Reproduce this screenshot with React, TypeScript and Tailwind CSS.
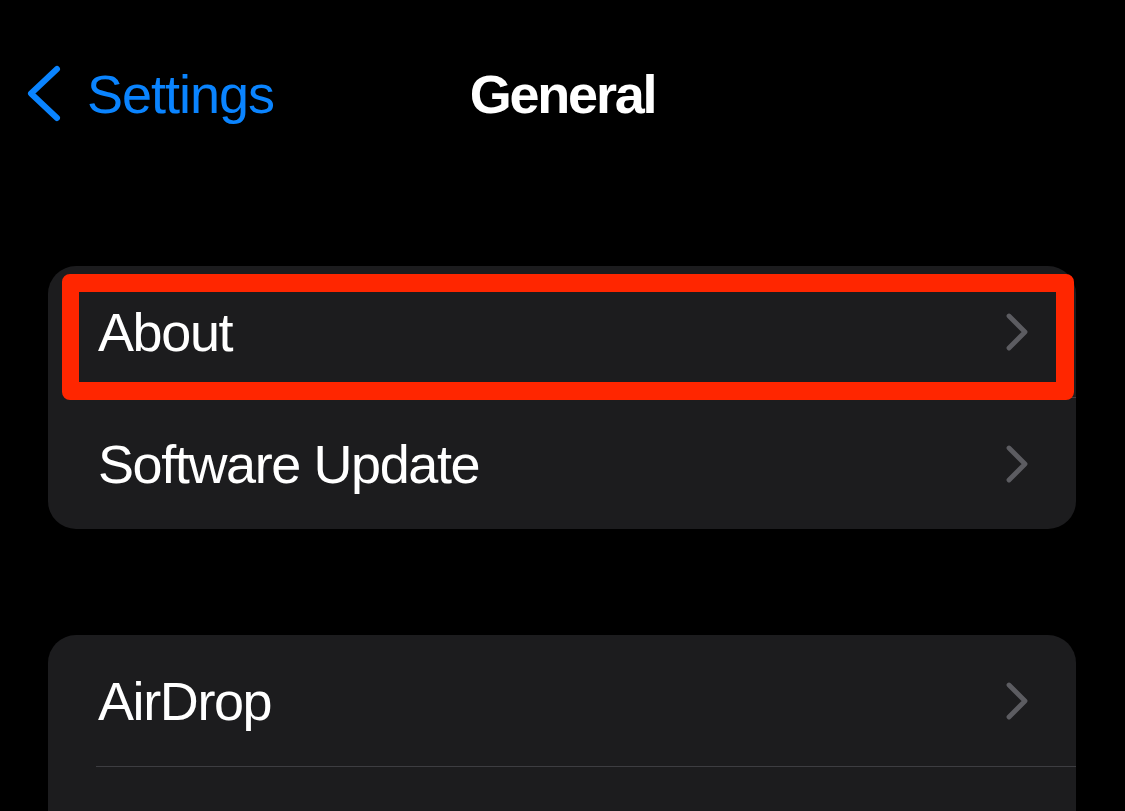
import React from 'react';

const FONT = { fontFamily: '"Liberation Sans", Arial, sans-serif' };

const Chevron: React.FC = () => (
  <svg width="24" height="40" viewBox="0 0 24 40" fill="none" className="shrink-0">
    <path d="M4 4 L20 20 L4 36" stroke="#5c5c61" strokeWidth="4.8" strokeLinecap="round" strokeLinejoin="round" />
  </svg>
);

interface RowProps {
  label: string;
  highlighted?: boolean;
  divider?: boolean;
}

const Row: React.FC<RowProps> = ({ label, highlighted, divider }) => {
  return (
    <div className="relative">
      <div className="flex h-[131px] items-center justify-between pl-[50px] pr-[47px]">
        <span className="text-[54px] leading-none tracking-[-1.4px] text-white">{label}</span>
        <Chevron />
      </div>
      {divider && <div className="ml-[48px] h-px bg-[#3d3d41]" />}
      {/* red annotation box */}
      {highlighted && (
        <div className="pointer-events-none absolute left-[14px] top-[8px] h-[126px] w-[1012px] rounded-[8px] border-[18px] border-l-[17px] border-[#ff2600]" />
      )}
    </div>
  );
};

export default function App() {
  return (
    <div className="h-[811px] w-full overflow-hidden bg-black" style={FONT}>
      {/* nav bar */}
      <div className="grid h-[188px] grid-cols-[1fr_auto_1fr] items-center">
        <div className="flex items-center pl-[24px]">
          <svg width="40" height="62" viewBox="0 0 40 62" fill="none" className="shrink-0">
            <path d="M33 6 L7 30.5 L33 55" stroke="#0a84ff" strokeWidth="6" strokeLinecap="round" strokeLinejoin="round" />
          </svg>
          <span className="ml-[23px] text-[54px] leading-none tracking-[-1px] text-[#0a84ff]">Settings</span>
        </div>
        <span className="text-[54px] font-bold leading-none tracking-[-2.2px] text-white">General</span>
        <div />
      </div>

      <div className="ml-[48px] mr-[49px] mt-[78px] rounded-[28px] bg-[#1c1c1e]">
        <Row label="About" highlighted divider />
        <Row label="Software Update" />
      </div>

      <div className="ml-[48px] mr-[49px] mt-[106px] rounded-t-[28px] bg-[#1c1c1e]">
        <Row label="AirDrop" divider />
        <div className="h-[44px]" />
      </div>
    </div>
  );
}
